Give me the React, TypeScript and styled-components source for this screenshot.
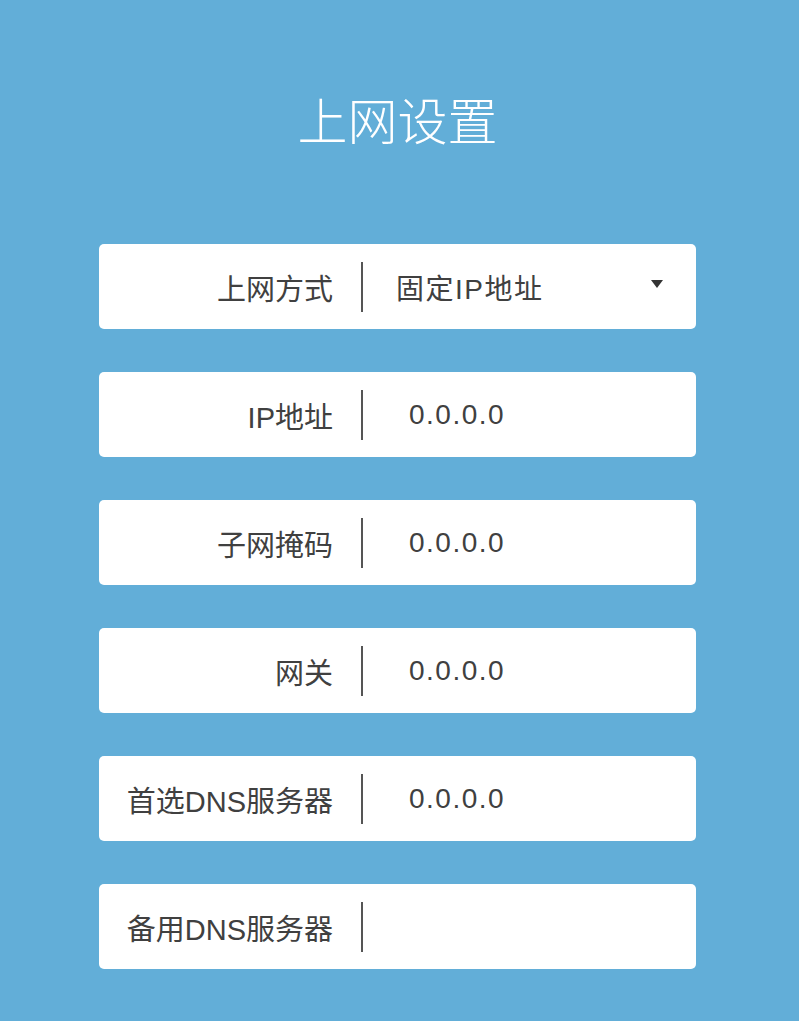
import React from 'react';
import styled, { createGlobalStyle } from 'styled-components';

const GlobalStyle = createGlobalStyle`
  html, body {
    margin: 0;
    padding: 0;
    background: #62aed8;
  }
  body {
    font-family: "Noto Sans CJK SC", "Noto Sans", sans-serif;
  }
`;

const Page = styled.div`
  min-height: 1021px;
  padding: 88px 4px 0 0;
  box-sizing: border-box;
  display: flex;
  flex-direction: column;
  align-items: center;
`;

const Title = styled.h1`
  margin: 0 0 96px;
  height: 60px;
  line-height: 60px;
  font-size: 50px;
  font-weight: 300;
  color: #fff;
`;

const Form = styled.div`
  width: 597px;
  display: flex;
  flex-direction: column;
  gap: 43px;
`;

const Row = styled.div`
  height: 85px;
  background: #fff;
  border-radius: 5px;
  display: flex;
  align-items: center;
  position: relative;
`;

const Label = styled.div`
  width: 234px;
  text-align: right;
  font-family: "Liberation Sans", "Noto Sans CJK SC", sans-serif;
  font-size: 29px;
  color: #404040;
  white-space: nowrap;
`;

const Divider = styled.div`
  width: 2px;
  height: 50px;
  background: #555;
  margin-left: 28px;
`;

const Value = styled.div<{ $pad: number }>`
  margin-left: ${p => p.$pad}px;
  font-family: "Liberation Sans", "Noto Sans CJK SC", sans-serif;
  font-size: 28px;
  letter-spacing: 1.5px;
  color: #404040;
  white-space: nowrap;
`;

const Caret = styled.div`
  position: absolute;
  right: 33px;
  top: 36px;
  width: 0;
  height: 0;
  border-left: 6px solid transparent;
  border-right: 6px solid transparent;
  border-top: 8px solid #333;
`;

type Field = { label: string; value: string; select?: boolean };

const fields: Field[] = [
  { label: '上网方式', value: '固定IP地址', select: true },
  { label: 'IP地址', value: '0.0.0.0' },
  { label: '子网掩码', value: '0.0.0.0' },
  { label: '网关', value: '0.0.0.0' },
  { label: '首选DNS服务器', value: '0.0.0.0' },
  { label: '备用DNS服务器', value: '' },
];

const App = () => {
  return (
    <>
      <GlobalStyle />
      <Page>
        <Title>上网设置</Title>
        <Form>
          {fields.map(f => (
            <Row key={f.label}>
              <Label>{f.label}</Label>
              <Divider />
              <Value $pad={f.select ? 33 : 46}>{f.value}</Value>
              {f.select && <Caret />}
            </Row>
          ))}
        </Form>
      </Page>
    </>
  );
};

export default App;
